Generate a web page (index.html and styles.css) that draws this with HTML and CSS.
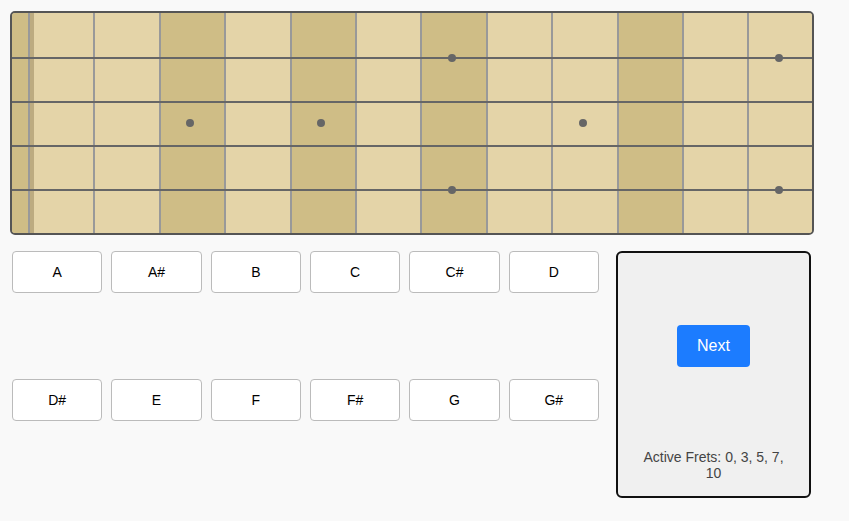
FILE: index.html
```html
<!DOCTYPE html>
<html lang="en">
<head>
    <meta charset="UTF-8">
    <title>Fretboard Trainer</title>
    <link rel="stylesheet" href="styles.css">
</head>
<body>
    <div class="fretboard">
        <div class="fret open active"></div>
        <div class="fret"></div>
        <div class="fret"></div>
        <div class="fret active"><span class="dot mid"></span></div>
        <div class="fret"></div>
        <div class="fret active"><span class="dot mid"></span></div>
        <div class="fret"></div>
        <div class="fret active"><span class="dot top"></span><span class="dot bottom"></span></div>
        <div class="fret"></div>
        <div class="fret"><span class="dot mid"></span></div>
        <div class="fret active"></div>
        <div class="fret"></div>
        <div class="fret"><span class="dot top"></span><span class="dot bottom"></span></div>
        <div class="string s1"></div>
        <div class="string s2"></div>
        <div class="string s3"></div>
        <div class="string s4"></div>
    </div>

    <div class="controls">
        <div class="notes">
            <button class="note">A</button>
            <button class="note">A#</button>
            <button class="note">B</button>
            <button class="note">C</button>
            <button class="note">C#</button>
            <button class="note">D</button>
            <button class="note">D#</button>
            <button class="note">E</button>
            <button class="note">F</button>
            <button class="note">F#</button>
            <button class="note">G</button>
            <button class="note">G#</button>
        </div>
        <div class="panel">
            <div class="panel-action">
                <button class="next">Next</button>
            </div>
            <p class="active-frets">Active Frets: 0, 3, 5, 7, 10</p>
        </div>
    </div>
</body>
</html>
```

FILE: styles.css
```css
body {
    margin: 0;
    padding: 11px 10px;
    background-color: #f9f9f9;
    font-family: "Liberation Sans", Arial, Helvetica, sans-serif;
    color: #000;
}
.fretboard {
    position: relative;
    display: flex;
    width: 800px;
    height: 220px;
    border: 2px solid #555;
    border-radius: 5px;
    overflow: hidden;
    background-color: #e4d4a8;
}
.fret {
    position: relative;
    flex: 0 0 65.4px;
    box-sizing: border-box;
    border-right: 2px solid #999;
    background-color: #e4d4a8;
}
.fret.open {
    flex: 0 0 18px;
}
.fret.open + .fret {
    border-left: 4px solid #bcab80;
}
.fret:nth-child(13) {
    flex: 1;
    border-right: none;
}
.fret.active {
    background-color: #cfbd86;
}
.string {
    position: absolute;
    left: 0;
    right: 0;
    height: 2px;
    background-color: #666;
}
.s1 { top: 20%; }
.s2 { top: 40%; }
.s3 { top: 60%; }
.s4 { top: 80%; }
.dot {
    position: absolute;
    z-index: 1;
    width: 8px;
    height: 8px;
    margin: -4px 0 0 -6px;
    left: 50%;
    border-radius: 50%;
    background-color: #666;
}
.dot.top { top: calc(20% + 1px); }
.dot.mid { top: 50%; }
.dot.bottom { top: calc(80% + 1px); }

.controls {
    display: flex;
    gap: 17px;
    width: 799px;
    height: 247px;
    margin: 16px 0 0 2px;
}
.notes {
    display: grid;
    width: 587px;
    grid-template-columns: repeat(6, 1fr);
    grid-template-rows: 1fr 1fr;
    gap: 9px;
    align-items: start;
}
.note {
    height: 42px;
    background-color: #fff;
    border: 1px solid #bbb;
    border-radius: 4px;
    font-family: inherit;
    font-size: 14px;
    color: #000;
}
.panel {
    display: flex;
    flex-direction: column;
    box-sizing: border-box;
    width: 195px;
    padding: 10px 20px 15px;
    background-color: #f0f0f0;
    border: 2px solid #111;
    border-radius: 6px;
}
.panel-action {
    flex: 1;
    display: flex;
    align-items: center;
    justify-content: center;
}
.next {
    height: 42px;
    padding: 0 20px;
    background-color: #1c7cff;
    color: #fff;
    border: none;
    border-radius: 4px;
    font-family: inherit;
    font-size: 16px;
}
.active-frets {
    margin: 20px 0 0;
    text-align: center;
    font-size: 14px;
    line-height: 16px;
    color: #444;
}
```
